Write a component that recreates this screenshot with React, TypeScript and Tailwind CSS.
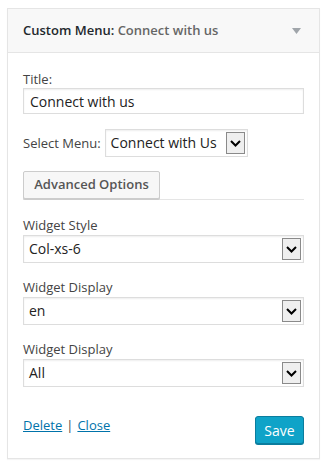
const font = { fontFamily: '"Open Sans", "Noto Sans", sans-serif' }

function Chevron() {
  return (
    <svg width="11" height="7" viewBox="0 0 11 7">
      <path d="M1 1 L5.5 5.5 L10 1" fill="none" stroke="#000" strokeWidth="2" />
    </svg>
  )
}

function FakeSelect({ value, className = '' }: { value: string; className?: string }) {
  return (
    <div className={`flex items-center h-[28px] bg-white border border-[#dddddd] shadow-[inset_0_1px_2px_rgba(0,0,0,0.07)] pl-[5px] pr-[2px] ${className}`}>
      <span className="flex-1 text-[14px] text-[#222] leading-none">{value}</span>
      <span className="flex items-center justify-center w-[19px] h-[22px] bg-[#efefef] border border-[#8a8a8a]">
        <Chevron />
      </span>
    </div>
  )
}

export default function App() {
  return (
    <div className="w-[325px] h-[464px] bg-white pt-[8px] pl-[7px]" style={font}>
      <div className="w-[313px] h-[451px] border border-[#e5e5e5] shadow-[0_1px_1px_rgba(0,0,0,0.04)] flex flex-col">
        <div className="h-[44px] bg-[#f8f8f8] border-b border-[#e5e5e5] flex items-center pl-[15px] pr-[18px]">
          <span className="flex-1 text-[13px] font-semibold text-[#23282d]">
            Custom Menu:{' '}
            <span className="text-[#666]">Connect with us</span>
          </span>
          <svg width="9" height="6" viewBox="0 0 9 6">
            <path d="M0 0 H9 L4.5 6 Z" fill="#a0a5aa" />
          </svg>
        </div>

        <div className="flex-1 px-[15px] pt-[18px] flex flex-col text-[13px] text-[#444]">
          <label className="leading-[16px]">Title:</label>
          <div className="mt-[1px] h-[26px] border border-[#dddddd] shadow-[inset_0_1px_2px_rgba(0,0,0,0.07)] flex items-center pl-[6px] text-[14px] text-[#222] w-[281px]">
            Connect with us
          </div>

          <div className="mt-[15px] h-[28px] flex items-center gap-[4px]">
            <span className="leading-[18px]">Select Menu:</span>
            <FakeSelect value="Connect with Us" className="w-[143px]" />
          </div>

          <div className="mt-[14px] w-[281px] border-b border-[#e5e5e5]">
            <div className="w-[137px] h-[28px] bg-[#f7f7f7] border border-[#cccccc] shadow-[0_1px_0_#cccccc] rounded-[2px] flex items-center justify-center font-semibold text-[#555]">
              Advanced Options
            </div>
          </div>

          <label className="mt-[16px] leading-[18px]">Widget Style</label>
          <FakeSelect value="Col-xs-6" className="mt-[1px] w-[281px]" />

          <label className="mt-[15px] leading-[18px]">Widget Display</label>
          <FakeSelect value="en" className="mt-[1px] w-[281px]" />

          <label className="mt-[15px] leading-[18px]">Widget Display</label>
          <FakeSelect value="All" className="mt-[1px] w-[281px]" />

          <div className="mt-[28px] w-[281px] flex items-start justify-between">
            <div className="mt-[1px] text-[13px] text-[#a0a5aa]">
              <a className="text-[#0073aa] underline">Delete</a>
              <span className="mx-[4px] text-[#444]">|</span>
              <a className="text-[#0073aa] underline">Close</a>
            </div>
            <button className="mt-[1px] w-[49px] h-[28px] bg-[#0fa3c8] border border-[#0b7d9e] shadow-[0_1px_0_#0b7d9e] rounded-[3px] text-white text-[14px]">
              Save
            </button>
          </div>
        </div>
      </div>
    </div>
  )
}
